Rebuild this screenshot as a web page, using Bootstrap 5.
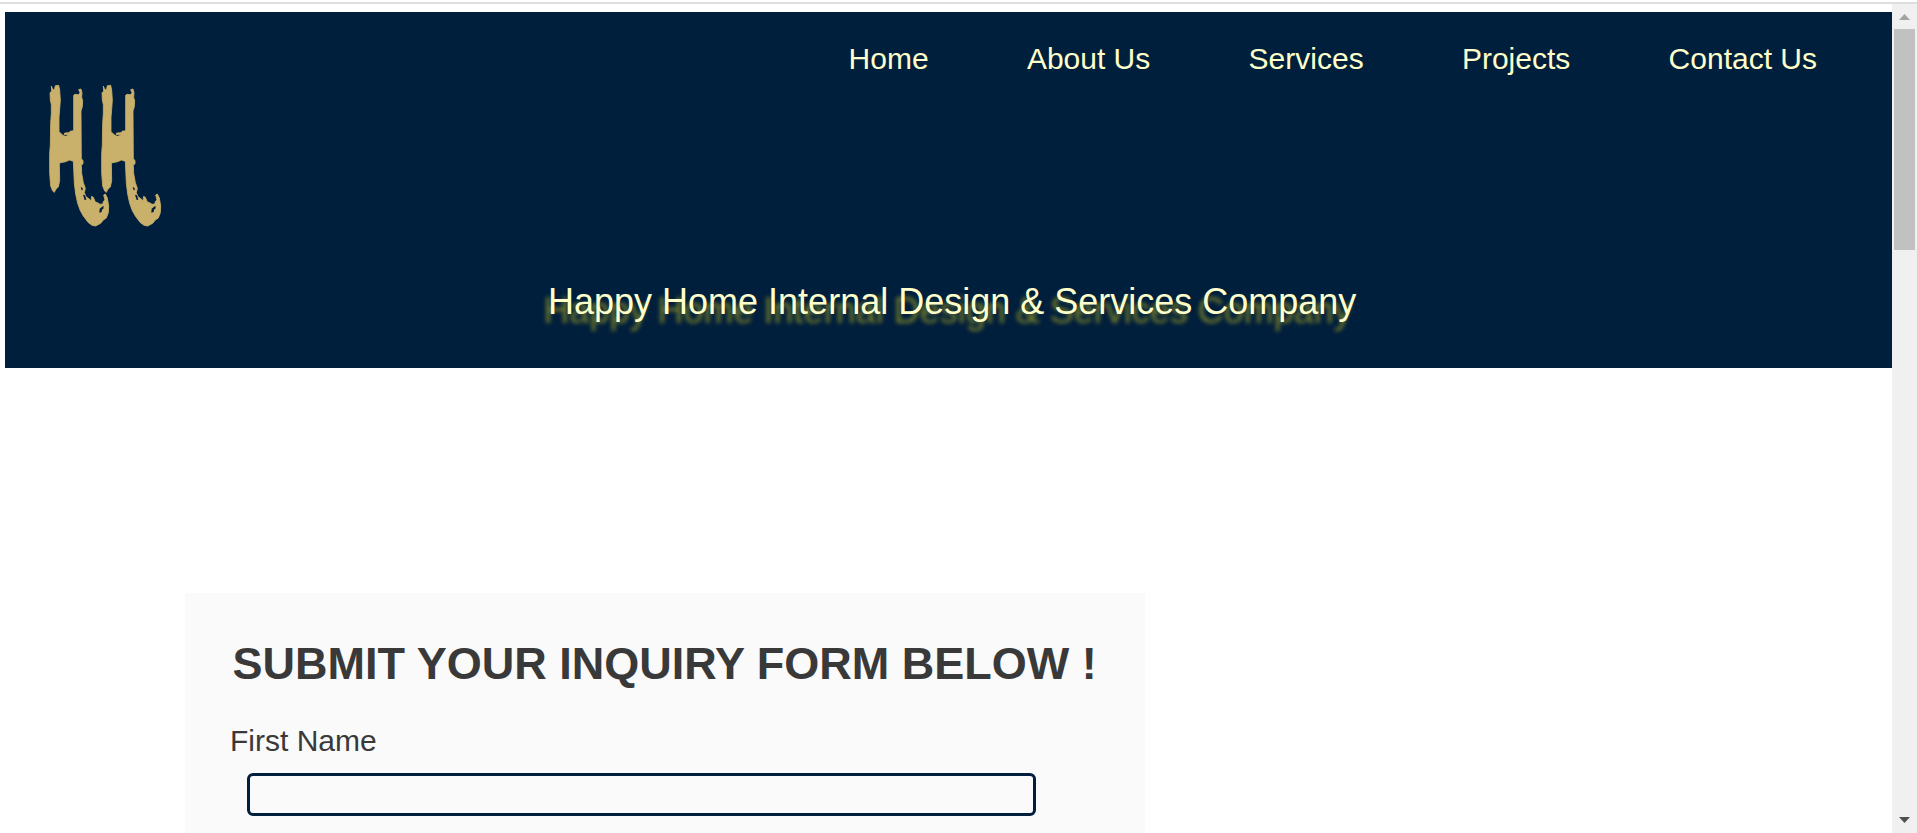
<!DOCTYPE html>
<html lang="en">
<head>
<meta charset="utf-8">
<title>Happy Home Internal Design &amp; Services Company</title>
<link href="https://cdn.jsdelivr.net/npm/bootstrap@5.3.0/dist/css/bootstrap.min.css" rel="stylesheet">
<style>
body{font-family:"Liberation Sans",Arial,sans-serif;color:#393939;background:#fff}
.top-rule{height:2px;margin-top:2px;background:#dedede}
.page-area{padding:8px 0 0 5px}
.site-header{height:356px;background:#001f3c;color:#ffffcb}
.logo{width:117px;height:143px;margin:72px 0 0 42px}
.main-nav{gap:98.3px;margin:30px 75px 0 0}
.main-nav .nav-link{padding:0;font-size:30px;line-height:34px;color:#ffffcb}
.tagline{font-size:36px;line-height:40px;margin:55px 0 0 543px;white-space:nowrap;text-shadow:-4.5px 8.5px 4.5px rgba(132,136,40,.9)}
.inquiry{width:960px;height:500px;margin:225px 0 0 180px;padding:46px 44px 0;background:#fafafa}
.inquiry h1{font-size:45px;line-height:50px;font-weight:700;margin:0 0 35px 3.5px;white-space:nowrap}
.inquiry label{font-size:30px;line-height:34px;display:block;margin-left:1px}
.inquiry .form-control{width:789px;height:43px;margin:15px 0 0 18px;border:3px solid #001f3c;border-radius:6px;background:#fafafa}
.scroll-rail{width:25px;background:#f0f0f0;padding:10px 2px}
.scroll-thumb{height:221px;background:#c1c1c1;margin-top:9px}
.scroll-rail svg{display:block;margin-left:5px}
</style>
</head>
<body class="vh-100 overflow-hidden d-flex flex-column">
<div class="top-rule flex-shrink-0"></div>
<div class="d-flex flex-grow-1 overflow-hidden">
  <main class="page-area flex-grow-1 overflow-hidden">
    <header class="site-header overflow-hidden">
      <div class="d-flex justify-content-between align-items-start">
        <svg class="logo" viewBox="141 252 351 429" aria-label="HH">
          <defs>
            <g id="brush-h">
              <path fill="#c9b06b" stroke="#c9b06b" stroke-width="2.5" stroke-linejoin="round" d="M154 258L158 268L163 270L166 257L176 256L179 270L181 300L179 328L177 352L177 396L184 401L188 406L197 409L206 406L213 402L206 405L192 403L194 399L207 398L210 394L221 392L221 286L225 283L236 284L240 278L236 269L243 267L246 278L245 292L248 302L247 320L243 333L244 477L249 481L249 491L244 496L245 520L250 548L256 565L253 578L258 590L269 598L273 603L275 589L280 592L286 606L293 608L300 613L308 612L311 603L315 600L311 585L316 582L322 594L326 618L325 638L319 654L310 660L302 670L287 678L276 676L264 667L250 648L241 632L233 610L227 582L223 550L220 484L208 480L197 485L178 489L179 542L175 561L168 567L163 577L158 573L152 558L149 520L149 460L151 435L152 370L154 340L154 314L151 300L150 278L155 274Z"/>
              <path fill="#001f3c" d="M299 626L310 617L311 625L306 629L305 636L298 638ZM242 561L247 563L249 569L245 571ZM249 584L255 586L259 599L254 600Z"/>
            </g>
          </defs>
          <use href="#brush-h"/><use href="#brush-h" x="156"/>
        </svg>
        <nav class="nav main-nav flex-nowrap">
          <a class="nav-link" href="#">Home</a><a class="nav-link" href="#">About Us</a><a class="nav-link" href="#">Services</a><a class="nav-link" href="#">Projects</a><a class="nav-link" href="#">Contact Us</a>
        </nav>
      </div>
      <p class="tagline">Happy Home Internal Design &amp; Services Company</p>
    </header>
    <form class="inquiry">
      <h1>SUBMIT YOUR INQUIRY FORM BELOW !</h1>
      <label for="first-name">First Name</label>
      <input class="form-control" id="first-name" type="text">
    </form>
  </main>
  <div class="scroll-rail d-flex flex-column justify-content-between flex-shrink-0">
    <div>
      <svg width="11" height="6"><path d="M0 6L5.5 0 11 6z" fill="#a3a3a3"/></svg>
      <div class="scroll-thumb"></div>
    </div>
    <svg width="11" height="6"><path d="M0 0h11L5.5 6z" fill="#505050"/></svg>
  </div>
</div>
<script src="https://cdn.jsdelivr.net/npm/bootstrap@5.3.0/dist/js/bootstrap.bundle.min.js"></script>
</body>
</html>
